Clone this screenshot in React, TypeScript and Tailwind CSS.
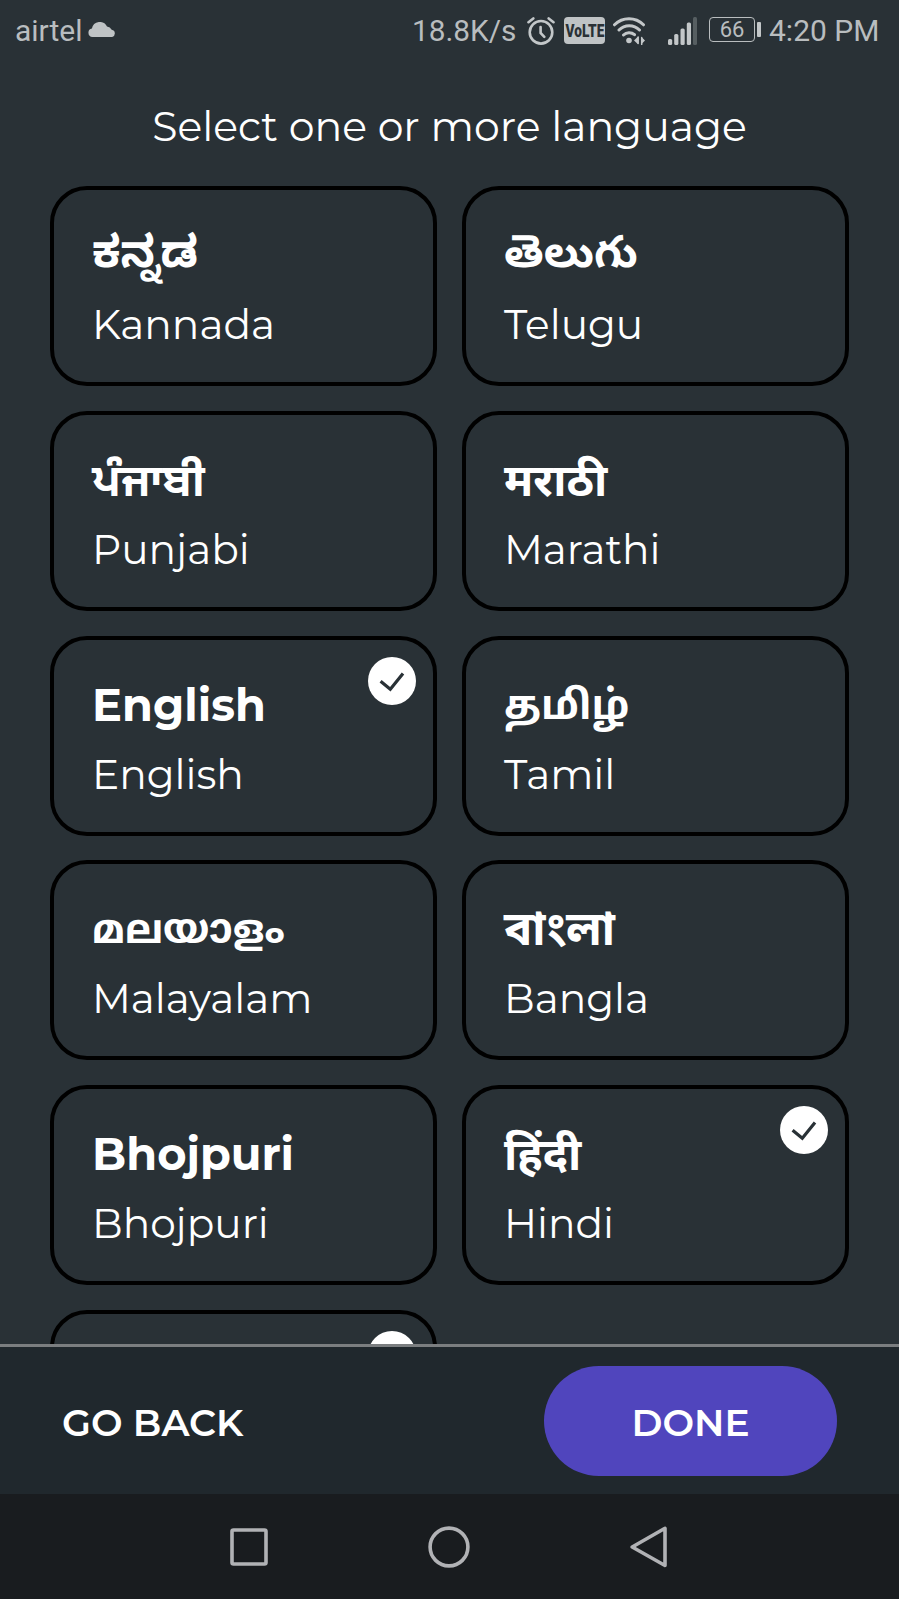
type Language = {
  native: string;
  label: string;
  selected?: boolean;
  nativeClass: string;
};

const languages: Language[] = [
  { native: "ಕನ್ನಡ", label: "Kannada", nativeClass: "-mt-1 mb-1 text-[44.7px] font-['Montserrat','Noto_Sans_Kannada',sans-serif]" },
  { native: "తెలుగు", label: "Telugu", nativeClass: "-mt-1 mb-1 text-[45px] font-['Montserrat','Noto_Sans_Telugu',sans-serif]" },
  { native: "ਪੰਜਾਬੀ", label: "Punjabi", nativeClass: "text-[45px] font-['Montserrat','Noto_Sans_Gurmukhi',sans-serif]" },
  { native: "मराठी", label: "Marathi", nativeClass: "text-[45px] font-['Montserrat','Noto_Sans_Devanagari',sans-serif]" },
  { native: "English", label: "English", selected: true, nativeClass: "text-[44.7px] font-['Montserrat',sans-serif]" },
  { native: "தமிழ்", label: "Tamil", nativeClass: "text-[40.6px] font-['Montserrat','Noto_Sans_Tamil',sans-serif]" },
  { native: "മലയാളം", label: "Malayalam", nativeClass: "text-[40.5px] font-['Montserrat','Noto_Sans_Malayalam',sans-serif]" },
  { native: "বাংলা", label: "Bangla", nativeClass: "text-[46.8px] font-['Montserrat','Noto_Sans_Bengali',sans-serif]" },
  { native: "Bhojpuri", label: "Bhojpuri", nativeClass: "text-[44.7px] font-['Montserrat',sans-serif]" },
  { native: "हिंदी", label: "Hindi", selected: true, nativeClass: "text-[45px] font-['Montserrat','Noto_Sans_Devanagari',sans-serif]" },
  { native: "", label: "", selected: true, nativeClass: "text-[45px] font-['Montserrat',sans-serif]" },
];

function StatusBar() {
  return (
    <header className="flex h-[62px] shrink-0 items-center pl-[15px] pr-[20px] font-['Roboto',sans-serif] text-[30px] leading-[62px] text-[#b9bdbf]">
      <span className="w-[67px] whitespace-nowrap">airtel</span>
      <svg className="mb-[4px] ml-[6px] h-[15px] w-[28px]" viewBox="0 0 28 15" fill="#bfc3c5">
        <path d="M4.4 15a4.3 4.3 0 0 1-.5-8.5A8 8 0 0 1 19 4.6a6 6 0 0 1 4.700 3.200A3.700 3.700 0 0 1 24.200 15Z" />
      </svg>
      <div className="ml-auto flex items-center">
        <span className="w-[106px] whitespace-nowrap text-[29.8px]">18.8K/s</span>
        <svg className="mb-px ml-[9px] h-[28px] w-[28px]" viewBox="0 0 28 28" fill="none" stroke="#c3c7c9" strokeWidth="2.600" strokeLinecap="round">
          <circle cx="14" cy="15.300" r="11.300" />
          <path d="M1.500 5.200 6.300 1.400M26.500 5.200 21.700 1.400M13.600 10v6l3.700 3.800" />
        </svg>
        <span className="mb-px ml-[9px] flex h-[27px] w-[41px] items-center justify-center rounded-[4px] bg-[#bfc3c5]">
          <span className="scale-x-[0.72] font-['Roboto',sans-serif] text-[19px] font-black leading-none text-[#2a3136]">VoLTE</span>
        </span>
        <svg className="mb-px ml-[8px] h-[28px] w-[33px]" viewBox="0 0 33 28" fill="none" stroke="#c3c7c9" strokeWidth="3" strokeLinecap="round">
          <path d="M1.500 7.800a20.500 20.500 0 0 1 29 0M6 13a14.200 14.200 0 0 1 20.500 0M10.500 18a8 8 0 0 1 11-.3" />
          <circle cx="16" cy="23.500" r="2.800" fill="#c3c7c9" stroke="none" />
          <path d="m21 23.500 4-4v7.700ZM32 23.500l-3.500-3.500v7Z" fill="#c3c7c9" stroke="none" />
          <path d="M25.200 20v6.500M28.700 20.500v7" strokeWidth="1.500" />
        </svg>
        <svg className="ml-[22px] h-[28px] w-[29px]" viewBox="0 0 29 28" fill="#c3c7c9">
          <rect x="0" y="22" width="4.200" height="6" rx="1.500" />
          <rect x="6.200" y="17" width="4.200" height="11" rx="1.500" />
          <rect x="12.500" y="11.500" width="4.200" height="16.500" rx="1.500" />
          <rect x="18.800" y="5.500" width="4.200" height="22.500" rx="1.500" />
          <rect x="25" y="0" width="4" height="28" rx="1.500" fill="#565e61" />
        </svg>
        <span className="mb-[3px] ml-[12px] flex h-[25px] w-[46px] items-center justify-center rounded-[4px] border-[1.5px] border-[#b9bdbf] text-[22px] leading-none">66</span>
        <span className="mb-[3px] ml-[2px] h-[15px] w-[4px] rounded-[1px] bg-[#c3c7c9]" />
        <span className="ml-[8px] w-[110px] whitespace-nowrap">4:20 PM</span>
      </div>
    </header>
  );
}

function CheckBadge() {
  return (
    <span className="absolute right-[17px] top-[17px] flex size-[48px] items-center justify-center rounded-full bg-white">
      <svg className="size-[48px]" viewBox="0 0 48 48" fill="none" stroke="#293136" strokeWidth="3.200">
        <path d="m12.600 24.200 9.700 8L35 16.500" />
      </svg>
    </span>
  );
}

function LanguageCard({ language }: { language: Language }) {
  return (
    <button className="relative flex h-[200px] flex-col items-start rounded-[37px] border-4 border-black pl-[38px] pt-[37px] text-left">
      <span className={`h-[56px] whitespace-nowrap font-bold leading-[56px] ${language.nativeClass}`}>
        {language.native}
      </span>
      <span className="mt-[18px] h-[48px] whitespace-nowrap text-[40.7px] leading-[48px]">{language.label}</span>
      {language.selected && <CheckBadge />}
    </button>
  );
}

function NavigationBar() {
  return (
    <nav className="flex h-[105px] shrink-0 items-center justify-center gap-[158px] bg-[#191c1f] pr-px">
      <svg className="size-[42px]" viewBox="0 0 42 42" fill="none" stroke="#b1b2b5" strokeWidth="3.600">
        <rect x="4" y="4" width="34" height="34" rx="1.500" />
      </svg>
      <svg className="size-[42px]" viewBox="0 0 42 42" fill="none" stroke="#b1b2b5" strokeWidth="3.600">
        <circle cx="21" cy="21" r="18.900" />
      </svg>
      <svg className="size-[42px]" viewBox="0 0 42 42" fill="none" stroke="#b1b2b5" strokeWidth="3.600" strokeLinejoin="round">
        <path d="M37 2.300v37.200L4.200 21Z" />
      </svg>
    </nav>
  );
}

export default function App() {
  return (
    <div className="flex h-[1599px] w-[899px] flex-col overflow-hidden bg-[#293136] font-['Montserrat',sans-serif] text-white">
      <StatusBar />
      <h1 className="mt-[36px] h-[56px] shrink-0 text-center text-[41px] font-normal leading-[56px]">
        Select one or more language
      </h1>
      <main className="min-h-0 flex-1 overflow-hidden px-[50px] pt-[32px]">
        <div className="grid grid-cols-2 gap-x-[25px] gap-y-[24.8px]">
          {languages.map((language, index) => (
            <LanguageCard key={index} language={language} />
          ))}
        </div>
      </main>
      <footer className="flex h-[150px] shrink-0 items-start justify-between border-t-[3px] border-[#7b7e80] bg-[#20282d] pl-[62px] pr-[62px] pt-[19px] text-[37.500px] font-semibold">
        <button className="h-[110px] leading-[113px]">GO BACK</button>
        <button className="h-[110px] w-[293px] rounded-full bg-[#5045bd] leading-[113px]">DONE</button>
      </footer>
      <NavigationBar />
    </div>
  );
}
